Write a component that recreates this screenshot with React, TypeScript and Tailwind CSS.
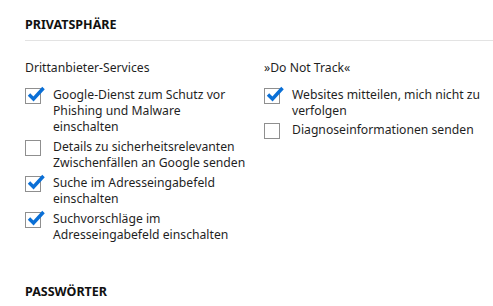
import React from "react";

function Box({ checked }: { checked: boolean }) {
  return (
    <span className="relative mt-[1px] h-[16px] w-[16px] shrink-0 border border-[#8f8f8f] bg-white">
      {checked && (
        <svg className="absolute left-[1px] top-[-3px]" width="18" height="16" viewBox="0 0 18 16">
          <path d="M2 8.5 L6.5 13 L16.5 2" fill="none" stroke="#0a6fd6" strokeWidth="3.4" strokeLinecap="butt" strokeLinejoin="miter" />
        </svg>
      )}
    </span>
  );
}

function Item({ checked, lines }: { checked: boolean; lines: string[] }) {
  return (
    <div className="flex items-start gap-[12px]">
      <Box checked={checked} />
      <div className="leading-[16px]">
        {lines.map((l) => (
          <div key={l}>{l}</div>
        ))}
      </div>
    </div>
  );
}

export default function App() {
  return (
    <div
      className="h-[306px] w-[493px] overflow-hidden bg-white pl-[25px] text-[12.2px] text-[#1f1f1f]"
      style={{ fontFamily: '"Noto Sans", sans-serif' }}
    >
      <div className="pt-[16px] text-[12.5px] font-bold leading-[18px] text-[#111]">PRIVATSPHÄRE</div>
      <div className="mt-[6px] h-px bg-[#e3e3e3]" />
      <div className="mt-[18px] flex">
        <div className="w-[239px]">
          <div className="leading-[18px]">Drittanbieter-Services</div>
          <div className="mt-[10px] flex flex-col gap-[4px]">
            <Item checked lines={["Google-Dienst zum Schutz vor", "Phishing und Malware", "einschalten"]} />
            <Item checked={false} lines={["Details zu sicherheitsrelevanten", "Zwischenfällen an Google senden"]} />
            <Item checked lines={["Suche im Adresseingabefeld", "einschalten"]} />
            <Item checked lines={["Suchvorschläge im", "Adresseingabefeld einschalten"]} />
          </div>
        </div>
        <div className="flex-1">
          <div className="leading-[18px]">»Do Not Track«</div>
          <div className="mt-[10px] flex flex-col gap-[3px]">
            <Item checked lines={["Websites mitteilen, mich nicht zu", "verfolgen"]} />
            <Item checked={false} lines={["Diagnoseinformationen senden"]} />
          </div>
        </div>
      </div>
      <div className="mt-[40px] text-[12.5px] font-bold leading-[18px] text-[#111]">PASSWÖRTER</div>
      <div className="mt-[6px] h-px bg-[#e3e3e3]" />
    </div>
  );
}
